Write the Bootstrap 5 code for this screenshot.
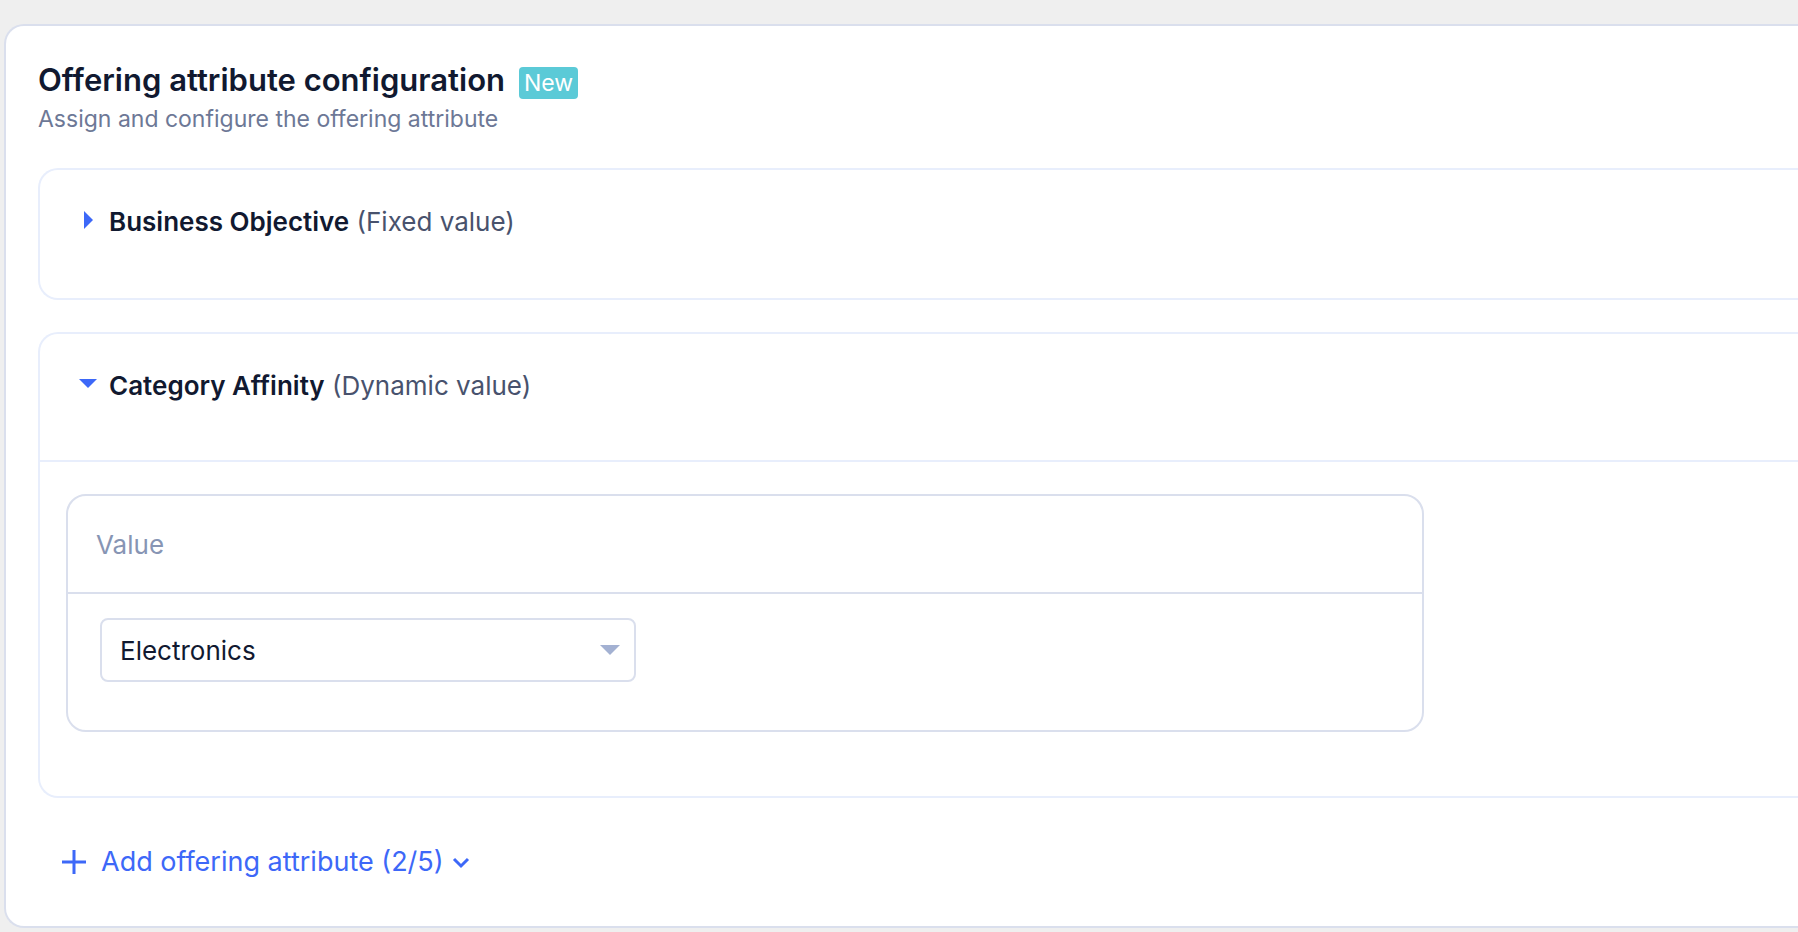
<!DOCTYPE html>
<html lang="en">
<head>
<meta charset="utf-8">
<meta name="viewport" content="width=device-width, initial-scale=1">
<title>Offering attribute configuration</title>
<link href="https://cdn.jsdelivr.net/npm/bootstrap@5.3.0/dist/css/bootstrap.min.css" rel="stylesheet">
<style>
  :root { --ink: #111930; --accent: #3d68f8; --line: #dadfed; --line-soft: #e8eefc; }
  body { background: #efefef; color: var(--ink); font-family: Inter, "Liberation Sans", sans-serif; font-size: 26px; line-height: 40px; padding: 24px 0 4px 4px; }
  .panel { background: #fff; border: 2px solid var(--line); border-right: 0; border-radius: 20px 0 0 20px; padding: 32px 0 44px 32px; }
  .title-row { gap: 14px; }
  .panel-title { font-size: 31px; font-weight: 600; line-height: 44px; }
  .tag-new { background: #5bcad7; border-radius: 4px; font-size: 23px; font-weight: 400; line-height: 32px; padding: 0 5px; }
  .subtitle { color: #6d7896; font-size: 23px; line-height: 34px; margin-bottom: 32px; }
  .attr { border: 2px solid var(--line-soft); border-right: 0; border-radius: 20px 0 0 20px; }
  .attr + .attr { margin-top: 32px; }
  .attr-toggle { gap: 12px; line-height: 44px; padding: 30px 39px 52px; border: 0; border-bottom: 2px solid transparent; background: none; color: var(--ink); }
  .attr-toggle svg { margin-bottom: 4px; }
  .attr-toggle[aria-expanded="true"] { border-bottom-color: var(--line-soft); }
  .attr-name { font-weight: 600; }
  .attr-kind { color: #48526d; }
  .attr-body { padding: 32px 26px 64px; }
  .value-box { border: 2px solid var(--line); border-radius: 20px; max-width: 1358px; }
  .value-head { border-bottom: 2px solid var(--line); color: #8795b4; line-height: 42px; padding: 28px 28px 26px; }
  .value-body { padding: 24px 32px 48px; }
  .value-select { border: 2px solid var(--line); border-radius: 8px; color: var(--ink); font-size: 26px; line-height: 40px; max-width: 536px; padding: 11px 48px 9px 18px;
    background-image: url("data:image/svg+xml,%3Csvg xmlns='http://www.w3.org/2000/svg' viewBox='0 0 20 10'%3E%3Cpath fill='%23a3b1d2' d='M0 0h20L10 10z'/%3E%3C/svg%3E"); background-size: 20px 10px; background-position: right 14px center; }
  .add-btn { border: 0; background: none; color: var(--accent); font-size: 27px; gap: 15px; margin: 44px 0 0 24px; padding: 0; }
</style>
</head>
<body>
<main class="panel">
  <header>
    <div class="title-row d-flex align-items-baseline">
      <h1 class="panel-title mb-0">Offering attribute configuration</h1>
      <span class="badge tag-new">New</span>
    </div>
    <p class="subtitle">Assign and configure the offering attribute</p>
  </header>

  <section class="attr">
    <button type="button" class="attr-toggle d-flex align-items-center w-100 text-start" aria-expanded="false">
      <svg width="18" height="18" viewBox="0 0 18 18" fill="#3d68f8" aria-hidden="true"><path d="M5 0l9 9-9 9z"/></svg>
      <span><span class="attr-name">Business Objective</span> <span class="attr-kind">(Fixed value)</span></span>
    </button>
  </section>

  <section class="attr">
    <button type="button" class="attr-toggle d-flex align-items-center w-100 text-start" aria-expanded="true" aria-controls="category-body">
      <svg width="18" height="18" viewBox="0 0 18 18" fill="#3d68f8" aria-hidden="true"><path d="M0 4h18l-9 9z"/></svg>
      <span><span class="attr-name">Category Affinity</span> <span class="attr-kind">(Dynamic value)</span></span>
    </button>
    <div class="attr-body" id="category-body">
      <div class="value-box">
        <div class="value-head"><label class="d-block" for="category-value">Value</label></div>
        <div class="value-body">
          <select class="form-select value-select" id="category-value">
            <option selected>Electronics</option>
          </select>
        </div>
      </div>
    </div>
  </section>

  <button type="button" class="add-btn d-flex align-items-center">
    <svg width="24" height="24" viewBox="0 0 24 24" fill="none" stroke="currentColor" stroke-width="3" aria-hidden="true"><path d="M12 0v24M0 12h24"/></svg>
    <span class="d-flex align-items-center gap-2">Add offering attribute (2/5)
      <svg width="18" height="18" viewBox="0 0 18 18" fill="none" stroke="currentColor" stroke-width="3" aria-hidden="true"><path d="M2 6l7 7 7-7"/></svg>
    </span>
  </button>
</main>
<script src="https://cdn.jsdelivr.net/npm/bootstrap@5.3.0/dist/js/bootstrap.bundle.min.js"></script>
</body>
</html>
